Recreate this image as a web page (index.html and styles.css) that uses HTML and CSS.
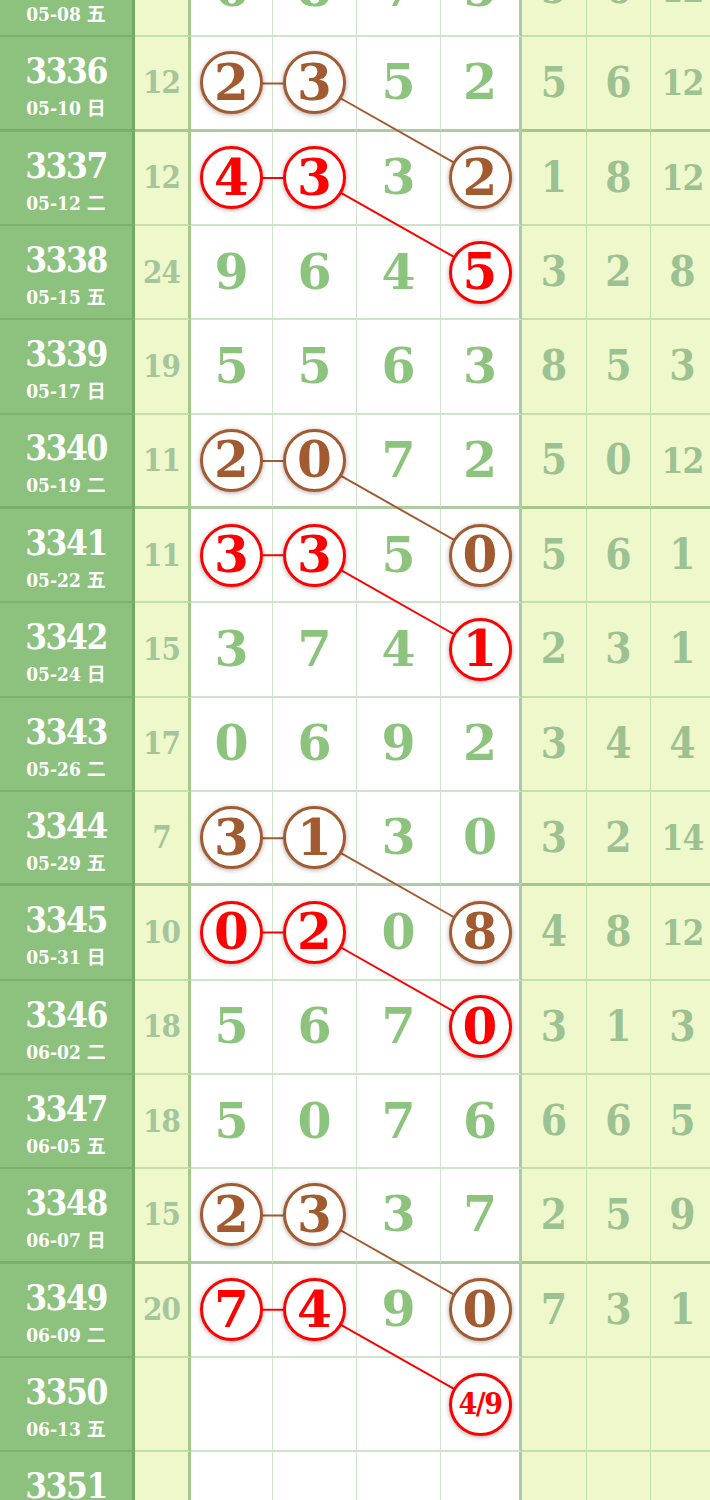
FILE: index.html
```html
<!DOCTYPE html>
<html lang="zh">
<head>
<meta charset="utf-8">
<title>走势图</title>
<link rel="stylesheet" href="styles.css">
</head>
<body>
<div class="board">
  <svg class="links" width="715" height="1604" viewBox="0 0 715 1604">
    <g class="brown">
      <line x1="231.5" y1="140.5" x2="314.5" y2="140.5"/><line x1="314.5" y1="140.5" x2="481" y2="234.9"/>
      <line x1="231.5" y1="517.9" x2="314.5" y2="517.9"/><line x1="314.5" y1="517.9" x2="481" y2="612.2"/>
      <line x1="231.5" y1="895.2" x2="314.5" y2="895.2"/><line x1="314.5" y1="895.2" x2="481" y2="989.5"/>
      <line x1="231.5" y1="1272.5" x2="314.5" y2="1272.5"/><line x1="314.5" y1="1272.5" x2="481" y2="1366.8"/>
    </g>
    <g class="red">
      <line x1="231.5" y1="234.9" x2="314.5" y2="234.9"/><line x1="314.5" y1="234.9" x2="481" y2="329.2"/>
      <line x1="231.5" y1="612.2" x2="314.5" y2="612.2"/><line x1="314.5" y1="612.2" x2="481" y2="706.5"/>
      <line x1="231.5" y1="989.5" x2="314.5" y2="989.5"/><line x1="314.5" y1="989.5" x2="481" y2="1083.8"/>
      <line x1="231.5" y1="1366.8" x2="314.5" y2="1366.8"/><line x1="314.5" y1="1366.8" x2="481" y2="1461.2"/>
    </g>
  </svg>

  <div class="row">
    <div class="c id"><span class="no">3335</span><span class="dt">05-08 五</span></div>
    <div class="c s">11</div>
    <div class="c w">6</div><div class="c w">8</div><div class="c w">7</div><div class="c w e">5</div>
    <div class="c y">5</div><div class="c y">6</div><div class="c y sm">12</div>
  </div>

  <div class="row sep">
    <div class="c id"><span class="no">3336</span><span class="dt">05-10 日</span></div>
    <div class="c s">12</div>
    <div class="c w"><span class="ball br">2</span></div><div class="c w"><span class="ball br">3</span></div><div class="c w">5</div><div class="c w e">2</div>
    <div class="c y">5</div><div class="c y">6</div><div class="c y sm">12</div>
  </div>

  <div class="row">
    <div class="c id"><span class="no">3337</span><span class="dt">05-12 二</span></div>
    <div class="c s">12</div>
    <div class="c w"><span class="ball rd">4</span></div><div class="c w"><span class="ball rd">3</span></div><div class="c w">3</div><div class="c w e"><span class="ball br">2</span></div>
    <div class="c y">1</div><div class="c y">8</div><div class="c y sm">12</div>
  </div>

  <div class="row">
    <div class="c id"><span class="no">3338</span><span class="dt">05-15 五</span></div>
    <div class="c s">24</div>
    <div class="c w">9</div><div class="c w">6</div><div class="c w">4</div><div class="c w e"><span class="ball rd">5</span></div>
    <div class="c y">3</div><div class="c y">2</div><div class="c y">8</div>
  </div>

  <div class="row">
    <div class="c id"><span class="no">3339</span><span class="dt">05-17 日</span></div>
    <div class="c s">19</div>
    <div class="c w">5</div><div class="c w">5</div><div class="c w">6</div><div class="c w e">3</div>
    <div class="c y">8</div><div class="c y">5</div><div class="c y">3</div>
  </div>

  <div class="row sep">
    <div class="c id"><span class="no">3340</span><span class="dt">05-19 二</span></div>
    <div class="c s">11</div>
    <div class="c w"><span class="ball br">2</span></div><div class="c w"><span class="ball br">0</span></div><div class="c w">7</div><div class="c w e">2</div>
    <div class="c y">5</div><div class="c y">0</div><div class="c y sm">12</div>
  </div>

  <div class="row">
    <div class="c id"><span class="no">3341</span><span class="dt">05-22 五</span></div>
    <div class="c s">11</div>
    <div class="c w"><span class="ball rd">3</span></div><div class="c w"><span class="ball rd">3</span></div><div class="c w">5</div><div class="c w e"><span class="ball br">0</span></div>
    <div class="c y">5</div><div class="c y">6</div><div class="c y">1</div>
  </div>

  <div class="row">
    <div class="c id"><span class="no">3342</span><span class="dt">05-24 日</span></div>
    <div class="c s">15</div>
    <div class="c w">3</div><div class="c w">7</div><div class="c w">4</div><div class="c w e"><span class="ball rd">1</span></div>
    <div class="c y">2</div><div class="c y">3</div><div class="c y">1</div>
  </div>

  <div class="row">
    <div class="c id"><span class="no">3343</span><span class="dt">05-26 二</span></div>
    <div class="c s">17</div>
    <div class="c w">0</div><div class="c w">6</div><div class="c w">9</div><div class="c w e">2</div>
    <div class="c y">3</div><div class="c y">4</div><div class="c y">4</div>
  </div>

  <div class="row sep">
    <div class="c id"><span class="no">3344</span><span class="dt">05-29 五</span></div>
    <div class="c s">7</div>
    <div class="c w"><span class="ball br">3</span></div><div class="c w"><span class="ball br">1</span></div><div class="c w">3</div><div class="c w e">0</div>
    <div class="c y">3</div><div class="c y">2</div><div class="c y sm">14</div>
  </div>

  <div class="row">
    <div class="c id"><span class="no">3345</span><span class="dt">05-31 日</span></div>
    <div class="c s">10</div>
    <div class="c w"><span class="ball rd">0</span></div><div class="c w"><span class="ball rd">2</span></div><div class="c w">0</div><div class="c w e"><span class="ball br">8</span></div>
    <div class="c y">4</div><div class="c y">8</div><div class="c y sm">12</div>
  </div>

  <div class="row">
    <div class="c id"><span class="no">3346</span><span class="dt">06-02 二</span></div>
    <div class="c s">18</div>
    <div class="c w">5</div><div class="c w">6</div><div class="c w">7</div><div class="c w e"><span class="ball rd">0</span></div>
    <div class="c y">3</div><div class="c y">1</div><div class="c y">3</div>
  </div>

  <div class="row">
    <div class="c id"><span class="no">3347</span><span class="dt">06-05 五</span></div>
    <div class="c s">18</div>
    <div class="c w">5</div><div class="c w">0</div><div class="c w">7</div><div class="c w e">6</div>
    <div class="c y">6</div><div class="c y">6</div><div class="c y">5</div>
  </div>

  <div class="row sep">
    <div class="c id"><span class="no">3348</span><span class="dt">06-07 日</span></div>
    <div class="c s">15</div>
    <div class="c w"><span class="ball br">2</span></div><div class="c w"><span class="ball br">3</span></div><div class="c w">3</div><div class="c w e">7</div>
    <div class="c y">2</div><div class="c y">5</div><div class="c y">9</div>
  </div>

  <div class="row">
    <div class="c id"><span class="no">3349</span><span class="dt">06-09 二</span></div>
    <div class="c s">20</div>
    <div class="c w"><span class="ball rd">7</span></div><div class="c w"><span class="ball rd">4</span></div><div class="c w">9</div><div class="c w e"><span class="ball br">0</span></div>
    <div class="c y">7</div><div class="c y">3</div><div class="c y">1</div>
  </div>

  <div class="row">
    <div class="c id"><span class="no">3350</span><span class="dt">06-13 五</span></div>
    <div class="c s"></div>
    <div class="c w"></div><div class="c w"></div><div class="c w"></div><div class="c w e"><span class="ball rd pair">4/9</span></div>
    <div class="c y"></div><div class="c y"></div><div class="c y"></div>
  </div>

  <div class="row">
    <div class="c id"><span class="no">3351</span><span class="dt">06-16 日</span></div>
    <div class="c s"></div>
    <div class="c w"></div><div class="c w"></div><div class="c w"></div><div class="c w e"></div>
    <div class="c y"></div><div class="c y"></div><div class="c y"></div>
  </div>
</div>
</body>
</html>
```

FILE: styles.css
```css
html, body {
  margin: 0;
  padding: 0;
  background: #ffffff;
  overflow: hidden;
}

.board {
  position: relative;
  width: 715px;
  margin-top: -57px;
  font-family: "DejaVu Serif", "Noto Sans CJK SC", serif;
}

.links {
  position: absolute;
  left: 0;
  top: 0;
  z-index: 1;
  pointer-events: none;
}
.links line { stroke-width: 2; }
.links .brown line { stroke: #a25b31; }
.links .red line { stroke: #ff0000; }

.row {
  display: grid;
  grid-template-columns: 135px 56px 82px 84px 84px 81px 65px 64px 64px;
  height: 94.33px;
}

.c {
  box-sizing: border-box;
  display: flex;
  align-items: center;
  justify-content: center;
  border-right: 1px solid rgba(110, 170, 95, 0.32);
  border-bottom: 2px solid rgba(110, 170, 95, 0.32);
  font-weight: bold;
  line-height: 1;
}

.row.sep .c {
  border-bottom: 3px solid rgba(105, 160, 90, 0.55);
}

.id {
  background: #8cc17e;
  color: #ffffff;
  flex-direction: column;
  gap: 10px;
  padding-top: 6px;
  border-right: 3px solid rgba(105, 160, 90, 0.7);
  border-bottom-color: rgba(95, 150, 80, 0.35);
}
.id .no {
  font-size: 35px;
  font-weight: 600;
  font-stretch: condensed;
  line-height: 34px;
  letter-spacing: -1.5px;
}
.id .dt {
  font-size: 19px;
  font-weight: bold;
  line-height: 20px;
  font-stretch: condensed;
}

.s {
  background: #eff8ca;
  color: #a3c69b;
  font-size: 31px;
  font-stretch: condensed;
  border-right: 3px solid rgba(105, 160, 90, 0.55);
  letter-spacing: -1px;
}

.w {
  background: #ffffff;
  color: #8cc47e;
  font-size: 49px;
}
.w.e {
  border-right: 3px solid rgba(105, 160, 90, 0.55);
}

.y {
  background: #eff8ca;
  color: #9cc293;
  font-size: 42px;
  font-stretch: condensed;
}
.y.sm {
  font-size: 35px;
  letter-spacing: -1px;
}

.ball {
  position: relative;
  z-index: 2;
  box-sizing: border-box;
  width: 63px;
  height: 63px;
  border-radius: 50%;
  border: 3px solid;
  background: #ffffff;
  display: flex;
  align-items: center;
  justify-content: center;
  font-size: 50px;
  font-weight: bold;
  box-shadow: 0 1px 5px rgba(0, 0, 0, 0.35);
}
.ball.br { color: #a25b31; border-color: #a25b31; }
.ball.rd { color: #ff0000; border-color: #ff0000; }
.ball.pair {
  font-size: 30px;
  letter-spacing: -1.5px;
  font-stretch: condensed;
}
```
